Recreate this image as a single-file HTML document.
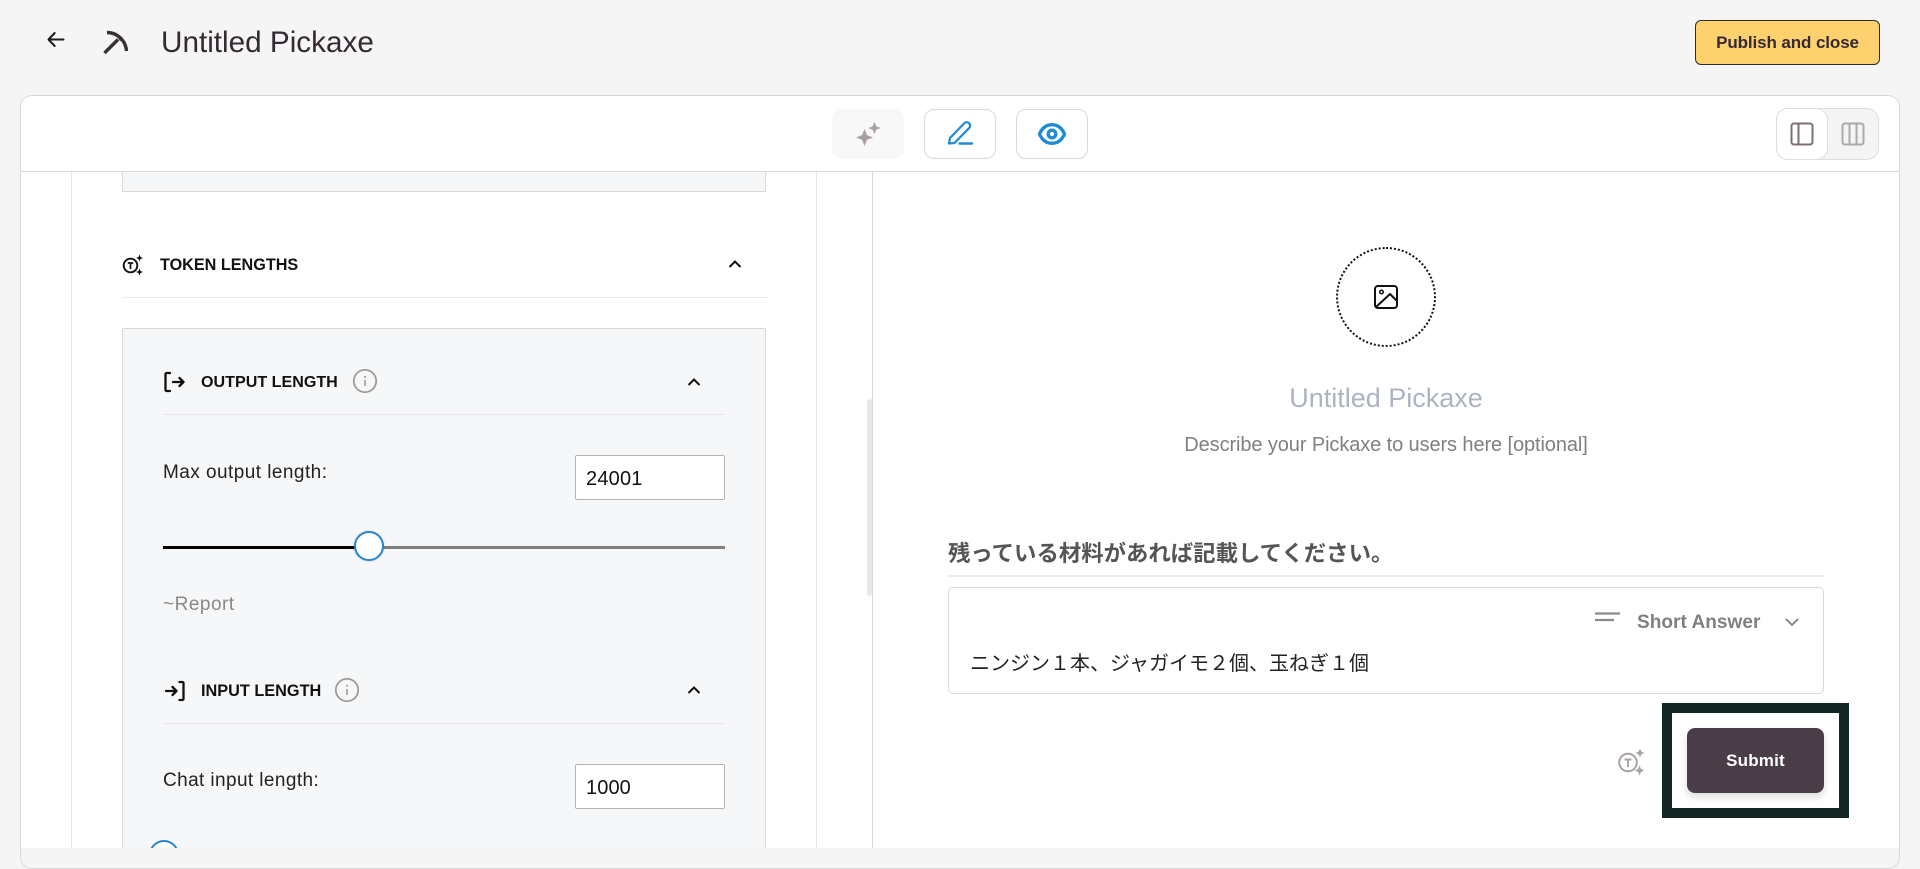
<!DOCTYPE html>
<html lang="ja">
<head>
<meta charset="utf-8">
<title>Untitled Pickaxe</title>
<style>
html,body{margin:0;padding:0;width:1920px;height:869px;overflow:hidden;background:#f5f5f5}
body{position:relative;font-family:"Liberation Sans","Noto Sans CJK JP",sans-serif;color:#000}
div,span,svg{position:absolute;box-sizing:border-box}
.t{white-space:nowrap;line-height:1}
svg{overflow:visible}
</style>
</head>
<body>
<!-- header -->
<svg style="left:46px;top:29.500px" width="20" height="20" viewBox="0 0 20 20" fill="none" stroke="#1c1c1c" stroke-width="2" stroke-linecap="round" stroke-linejoin="round"><path d="M2.500 9.500H17.500M8.700 3 2.500 9.500l6.200 6.500"/></svg>
<svg style="left:100px;top:28px" width="30" height="28" viewBox="0 0 30 28" fill="none" stroke="#3a2e36" stroke-width="3.400"><path d="M4.500 25 18 11.500"/><path d="M7 4.500C16 4.500 25.500 11 26.500 23"/><path d="M16.500 7 21 12.500" stroke-width="2"/></svg>
<div class="t" id="title" style="left:161px;top:28px;font-size:29.700px;color:#352a33">Untitled Pickaxe</div>
<div style="left:1695px;top:20px;width:185px;height:45px;background:#fed16f;border:1px solid #2d2a32;border-radius:6px"></div>
<div class="t" style="left:1695px;top:34px;width:185px;text-align:center;font-size:17px;font-weight:bold;letter-spacing:-.1px;color:#352a33">Publish and close</div>

<!-- card -->
<div style="left:20px;top:95px;width:1880px;height:774px;background:#fff;border:1px solid #d8d8d8;border-radius:12px"></div>
<div style="left:20px;top:171px;width:1880px;height:1px;background:#d8d8d8"></div>

<!-- toolbar -->
<div style="left:832px;top:109px;width:72px;height:50px;background:#f8f8f8;border-radius:10px"></div>
<svg style="left:856px;top:120px" width="26" height="28" viewBox="0 0 26 28"><path fill="#a89fa5" d="M8.500 9 10.900 15.100 17 17.500 10.900 19.900 8.500 26 6.100 19.900 0 17.500 6.100 15.100Z"/><path fill="#a89fa5" d="M18.500 2 20.300 6.200 24.500 8 20.300 9.800 18.500 14 16.700 9.800 12.500 8 16.700 6.200Z"/></svg>
<div style="left:924px;top:109px;width:72px;height:50px;border:1px solid #d8d8d8;border-radius:10px"></div>
<svg style="left:946px;top:120px" width="28" height="28" viewBox="0 0 28 28" fill="none" stroke="#1f8ad6" stroke-width="2.200" stroke-linejoin="round" stroke-linecap="round"><path d="M3 23.500l1-5.500L18 3.500c1.500-1.500 3.500-1.800 5-.3s1.500 3.500 0 5L8.500 23Z"/><path d="M13.500 23.500H26" stroke-width="2.400"/></svg>
<div style="left:1016px;top:109px;width:72px;height:50px;border:1px solid #d8d8d8;border-radius:10px"></div>
<svg style="left:1037px;top:122px" width="30" height="24" viewBox="0 0 30 24" fill="none" stroke="#1f8ad6" stroke-width="3.400"><path d="M2.500 12C5.500 5 10 2.700 15 2.700S24.500 5 27.500 12C24.500 19 20 21.300 15 21.300S5.500 19 2.500 12Z"/><circle cx="15" cy="12" r="3.800"/></svg>

<div style="left:1776px;top:108px;width:103px;height:52px;background:#f4f4f4;border:1px solid #dedede;border-radius:12px"></div>
<div style="left:1776px;top:108px;width:52px;height:52px;background:#fff;border:1px solid #dedede;border-radius:12px"></div>
<svg style="left:1790px;top:122px" width="24" height="24" viewBox="0 0 24 24" fill="none" stroke="#7c6f78" stroke-width="2"><rect x="1.500" y="1.500" width="21" height="21" rx="2.500"/><path d="M8.500 1.500v21"/></svg>
<svg style="left:1841px;top:122px" width="24" height="24" viewBox="0 0 24 24" fill="none" stroke="#aea8ac" stroke-width="2"><rect x="1.500" y="1.500" width="21" height="21" rx="2.500"/><path d="M8.500 1.500v21M15.500 1.500v21"/></svg>

<!-- left column -->
<div style="left:71px;top:172px;width:1px;height:676px;background:#e6e6e6"></div>
<div style="left:816px;top:172px;width:1px;height:676px;background:#e6e6e6"></div>
<div style="left:872px;top:172px;width:1px;height:676px;background:#d8d8d8"></div>
<div style="left:867px;top:399px;width:5px;height:197px;background:#e8e8ea;border-radius:3px"></div>

<div style="left:122px;top:172px;width:644px;height:20px;background:#f6f7f9;border:1px solid #d8d8d8;border-top:0"></div>

<!-- token lengths -->
<svg style="left:122px;top:253px" width="23" height="24" viewBox="0 0 23 24" fill="none" stroke="#111" stroke-width="1.900"><circle cx="8.500" cy="12.500" r="6.800"/><path d="M5.800 10h5.400M8.500 10v6" stroke-width="1.700"/><path d="M17.500 1.500l1 2.500 2.500 1-2.500 1-1 2.500-1-2.500-2.500-1 2.500-1ZM17.500 15.500l1 2.500 2.500 1-2.500 1-1 2.500-1-2.500-2.500-1 2.500-1Z" fill="#111" stroke="none"/></svg>
<div class="t" style="left:160px;top:257px;font-size:16.200px;font-weight:bold;color:#111">TOKEN LENGTHS</div>
<svg style="left:727px;top:258px" width="16" height="12" viewBox="0 0 16 12" fill="none" stroke="#111" stroke-width="2"><path d="M2.500 9 8 3.500 13.500 9"/></svg>
<div style="left:122px;top:297px;width:645px;height:1px;background:#e8e8e8"></div>

<div style="left:122px;top:328px;width:644px;height:530px;background:#f6f7f9;border:1px solid #d8d8d8;border-radius:2px"></div>

<!-- output length -->
<svg style="left:163px;top:370px" width="24" height="24" viewBox="0 0 24 24" fill="none" stroke="#111" stroke-width="2.300" stroke-linecap="round" stroke-linejoin="round"><path d="M7 3H3.500A1.500 1.500 0 0 0 2.500 4v16a1.500 1.500 0 0 0 1 1H7"/><path d="M10 12H20.500M16.500 8 20.500 12l-4 4"/></svg>
<div class="t" style="left:201px;top:374px;font-size:16.100px;font-weight:bold;color:#111">OUTPUT LENGTH</div>
<svg style="left:353px;top:369px" width="24" height="24" viewBox="0 0 24 24" fill="none"><circle cx="12" cy="12" r="11.200" stroke="#979797" stroke-width="1.700"/><path d="M12 11v6" stroke="#979797" stroke-width="1.500"/><circle cx="12" cy="7.800" r="1" fill="#979797"/></svg>
<svg style="left:686px;top:376px" width="16" height="12" viewBox="0 0 16 12" fill="none" stroke="#111" stroke-width="2"><path d="M2.500 9 8 3.500 13.500 9"/></svg>
<div style="left:163px;top:414px;width:562px;height:1px;background:#e8e8ea"></div>

<div class="t" style="left:163px;top:463px;font-size:19px;letter-spacing:.45px;color:#222">Max output length:</div>
<div style="left:575px;top:455px;width:150px;height:45px;background:#fff;border:1px solid #b4b4b4;border-radius:2px"></div>
<div class="t" style="left:586px;top:469px;font-size:20px;letter-spacing:.2px;color:#111">24001</div>

<div style="left:163px;top:546px;width:562px;height:3px;background:#7f7f7f"></div>
<div style="left:163px;top:546px;width:206px;height:3px;background:#000"></div>
<div style="left:354px;top:531px;width:30px;height:30px;background:#fff;border:2px solid #2a86cf;border-radius:50%;box-shadow:0 0 2px rgba(0,0,0,.2)"></div>

<div class="t" style="left:163px;top:595px;font-size:19px;letter-spacing:.5px;color:#888">~Report</div>

<!-- input length -->
<svg style="left:162px;top:679px" width="24" height="24" viewBox="0 0 24 24" fill="none" stroke="#111" stroke-width="2.300" stroke-linecap="round" stroke-linejoin="round"><path d="M17.500 3h3a1.500 1.500 0 0 1 1 1v16a1.500 1.500 0 0 1-1 1h-3"/><path d="M4 12H14.500M10.500 8 14.500 12l-4 4"/></svg>
<div class="t" style="left:201px;top:683px;font-size:16.300px;font-weight:bold;color:#111">INPUT LENGTH</div>
<svg style="left:335px;top:678px" width="24" height="24" viewBox="0 0 24 24" fill="none"><circle cx="12" cy="12" r="11.200" stroke="#979797" stroke-width="1.700"/><path d="M12 11v6" stroke="#979797" stroke-width="1.500"/><circle cx="12" cy="7.800" r="1" fill="#979797"/></svg>
<svg style="left:686px;top:684px" width="16" height="12" viewBox="0 0 16 12" fill="none" stroke="#111" stroke-width="2"><path d="M2.500 9 8 3.500 13.500 9"/></svg>
<div style="left:163px;top:723px;width:562px;height:1px;background:#e8e8ea"></div>

<div class="t" style="left:163px;top:771px;font-size:19px;letter-spacing:.4px;color:#222">Chat input length:</div>
<div style="left:575px;top:764px;width:150px;height:45px;background:#fff;border:1px solid #b4b4b4;border-radius:2px"></div>
<div class="t" style="left:586px;top:778px;font-size:20px;letter-spacing:.1px;color:#111">1000</div>
<div style="left:145px;top:835px;width:40px;height:13px;overflow:hidden"><div style="left:4px;top:5px;width:30px;height:30px;background:#fff;border:2px solid #2a86cf;border-radius:50%"></div></div>

<!-- bottom band -->
<div style="left:21px;top:848px;width:1878px;height:20px;background:#f5f5f5;border-radius:0 0 11px 11px"></div>

<!-- preview -->
<div style="left:1336px;top:247px;width:100px;height:100px;border:2px dotted #111;border-radius:50%"></div>
<svg style="left:1373px;top:284px" width="26" height="26" viewBox="0 0 26 26" fill="none" stroke="#111" stroke-width="2" stroke-linejoin="round"><rect x="2" y="2" width="22" height="22" rx="3"/><circle cx="8.500" cy="8" r="1.800" stroke-width="1.500"/><path d="M3 23 17 10l7 7"/></svg>
<div class="t" style="left:1186px;top:385px;width:400px;text-align:center;font-size:27px;color:#adb3c2">Untitled Pickaxe</div>
<div class="t" style="left:1086px;top:435px;width:600px;text-align:center;font-size:20px;letter-spacing:-.1px;color:#808080">Describe your Pickaxe to users here [optional]</div>

<div class="t" style="left:948px;top:541px;font-size:22.400px;font-weight:bold;color:#555;font-family:'Noto Sans CJK JP',sans-serif">残っている材料があれば記載してください。</div>
<div style="left:948px;top:575px;width:876px;height:2px;background:#ededf0"></div>

<div style="left:948px;top:587px;width:876px;height:107px;background:#fff;border:1px solid #d8d8d8;border-radius:5px"></div>
<svg style="left:1594px;top:611px" width="27" height="12" viewBox="0 0 27 12" fill="none" stroke="#8a8a8a" stroke-width="2.200"><path d="M1 2.500H26M1 9H20"/></svg>
<div class="t" style="left:1637px;top:613px;font-size:19px;font-weight:bold;letter-spacing:.05px;color:#808080">Short Answer</div>
<svg style="left:1784px;top:616px" width="16" height="12" viewBox="0 0 16 12" fill="none" stroke="#808080" stroke-width="1.800"><path d="M2 3 8 9l6-6"/></svg>
<div class="t" style="left:970px;top:652px;font-size:20px;color:#222;font-family:'Noto Sans CJK JP',sans-serif">ニンジン１本、ジャガイモ２個、玉ねぎ１個</div>

<svg style="left:1617px;top:747px" width="29" height="30" viewBox="0 0 29 30" fill="none" stroke="#a9a2a7" stroke-width="2"><circle cx="11" cy="15.500" r="8.800"/><path d="M7.500 12.500h7M11 12.500v7.500" stroke-width="1.900"/><path d="M23 1.500l1.400 3.100 3.100 1.400-3.100 1.400-1.400 3.100-1.400-3.100L18.500 6l3.100-1.400ZM22.500 18.500l1.500 3.500 3.500 1.500-3.500 1.500-1.500 3.500-1.500-3.500-3.500-1.500 3.500-1.500Z" fill="#a9a2a7" stroke="none"/></svg>

<div style="left:1662px;top:703px;width:187px;height:115px;background:#fff;border:10px solid #142725"></div>
<div style="left:1687px;top:728px;width:137px;height:65px;background:#4b3d47;border-radius:8px;box-shadow:0 4px 8px rgba(0,0,0,.14)"></div>
<div class="t" style="left:1687px;top:752px;width:137px;text-align:center;font-size:17px;font-weight:bold;letter-spacing:.2px;color:#fff">Submit</div>
</body>
</html>
